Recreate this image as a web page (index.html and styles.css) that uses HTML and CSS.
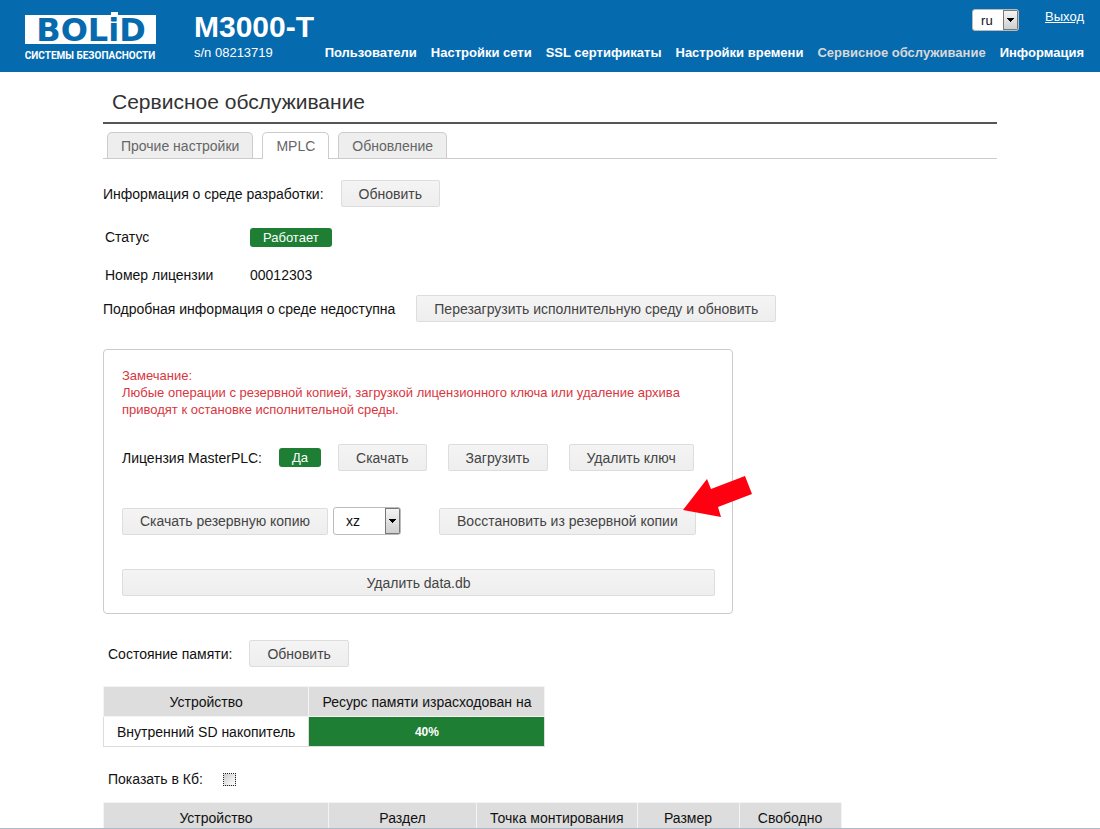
FILE: index.html
```html
<!DOCTYPE html>
<html lang="ru">
<head>
    <meta charset="UTF-8">
    <meta name="viewport" content="width=device-width, initial-scale=1.0">
    <title>M3000-T</title>
    <link rel="stylesheet" href="styles.css">
</head>
<body>
    <header>
        <a href="#" class="logo">
            <svg width="132" height="54" viewBox="0 0 132 54" role="img" aria-label="BOLiD">
                <rect x="0" y="5" width="131" height="29" fill="#fff"/>
                <rect x="86" y="2" width="7" height="5" fill="#fff"/>
                <text x="66" y="31" text-anchor="middle" class="logo-name">BOLiD</text>
                <text x="65" y="49" text-anchor="middle" class="logo-sub">СИСТЕМЫ БЕЗОПАСНОСТИ</text>
            </svg>
        </a>
        <div class="device">
            <div class="model">M3000-T</div>
            <div class="serial">s/n 08213719</div>
        </div>
        <div class="top">
            <div class="account">
                <select class="select lang" aria-label="Язык">
                    <option>ru</option>
                    <option>en</option>
                </select>
                <a href="#">Выход</a>
            </div>
            <nav>
                <ul>
                    <li><a href="#">Пользователи</a></li>
                    <li><a href="#">Настройки сети</a></li>
                    <li><a href="#">SSL сертификаты</a></li>
                    <li><a href="#">Настройки времени</a></li>
                    <li><a href="#" class="current">Сервисное обслуживание</a></li>
                    <li><a href="#">Информация</a></li>
                </ul>
            </nav>
        </div>
    </header>

    <main>
        <h1>Сервисное обслуживание</h1>
        <div class="tabs">
            <button type="button" class="tab">Прочие настройки</button>
            <button type="button" class="tab active">MPLC</button>
            <button type="button" class="tab">Обновление</button>
        </div>

        <div class="row env">
            <span>Информация о среде разработки:</span>
            <button type="button" class="btn">Обновить</button>
        </div>
        <dl class="info">
            <dt>Статус</dt>
            <dd><span class="badge">Работает</span></dd>
            <dt>Номер лицензии</dt>
            <dd>00012303</dd>
        </dl>
        <div class="row detail">
            <span>Подробная информация о среде недоступна</span>
            <button type="button" class="btn">Перезагрузить исполнительную среду и обновить</button>
        </div>

        <section class="panel">
            <p class="note">Замечание:<br>Любые операции с резервной копией, загрузкой лицензионного ключа или удаление архива приводят к остановке исполнительной среды.</p>
            <div class="row license">
                <span>Лицензия MasterPLC:</span>
                <span class="badge">Да</span>
                <div class="license-buttons">
                    <button type="button" class="btn">Скачать</button>
                    <button type="button" class="btn">Загрузить</button>
                    <button type="button" class="btn">Удалить ключ</button>
                </div>
            </div>
            <div class="row backup">
                <button type="button" class="btn">Скачать резервную копию</button>
                <select class="select format" aria-label="Формат архива">
                    <option>xz</option>
                    <option>gz</option>
                </select>
                <div class="restore">
                    <button type="button" class="btn">Восстановить из резервной копии</button>
                    <svg class="arrow" width="70" height="42" viewBox="0 0 70 42" aria-hidden="true">
                        <path d="M0 35 L24 4 L28 14 L62 1 L69 19 L35 32 L38 42 Z" fill="#ff0010"/>
                    </svg>
                </div>
            </div>
            <button type="button" class="btn wide">Удалить data.db</button>
        </section>

        <div class="row memory">
            <span>Состояние памяти:</span>
            <button type="button" class="btn">Обновить</button>
        </div>
        <table>
            <tr>
                <th>Устройство</th>
                <th>Ресурс памяти израсходован на</th>
            </tr>
            <tr>
                <td>Внутренний SD накопитель</td>
                <td class="usage">40%</td>
            </tr>
        </table>

        <div class="row units">
            <label for="showKb">Показать в Кб:</label>
            <input type="checkbox" id="showKb">
        </div>
        <table class="partitions">
            <tr>
                <th class="col-device">Устройство</th>
                <th class="col-part">Раздел</th>
                <th>Точка монтирования</th>
                <th class="col-size">Размер</th>
                <th class="col-size">Свободно</th>
            </tr>
        </table>
    </main>
    <div class="bottom-line"></div>
</body>
</html>
```

FILE: styles.css
```css
* {
    box-sizing: border-box;
}

body {
    margin: 0;
    height: 100vh;
    overflow: hidden;
    font-family: "Liberation Sans", Arial, sans-serif;
    font-size: 14px;
    line-height: 18px;
    color: #111;
    background: #fff;
}

button, select {
    font-family: inherit;
}

header {
    display: flex;
    height: 72px;
    padding: 0 16px 0 25px;
    background: #066aaf;
    color: #fff;
}

header a {
    color: #fff;
}

.logo {
    width: 132px;
    padding-top: 10px;
}

.logo-name {
    font: bold 32px "DejaVu Sans", sans-serif;
    fill: #066aaf;
}

.logo-sub {
    font: bold 10px Roboto, sans-serif;
    fill: #fff;
}

.device {
    margin-left: 37px;
    padding-top: 10px;
    white-space: nowrap;
}

.model {
    font-size: 30px;
    font-weight: bold;
    line-height: 34px;
}

.serial {
    font-size: 13px;
}

.top {
    flex: 1;
}

.account {
    display: flex;
    justify-content: flex-end;
    align-items: flex-start;
    gap: 26px;
    height: 43px;
    padding-top: 8px;
    font-size: 13px;
}

nav ul {
    display: flex;
    justify-content: flex-end;
    gap: 14px;
    margin: 0;
    padding: 0;
    list-style: none;
}

nav a {
    font-size: 13px;
    font-weight: bold;
    text-decoration: none;
    white-space: nowrap;
}

nav .current {
    color: #d8d8d8;
}

/* drop-down with a grey button at the right edge */
.select {
    appearance: none;
    border: 1px solid #bbb;
    border-radius: 3px;
    color: #111;
    background-color: #fff;
    background-image:
        linear-gradient(#000, #000),
        linear-gradient(#000, #000),
        linear-gradient(#000, #000),
        linear-gradient(#000, #000),
        linear-gradient(#f4f4f4, #cfcfcf),
        linear-gradient(#777, #777);
    background-repeat: no-repeat;
    background-size: 7px 1px, 5px 1px, 3px 1px, 1px 1px, 13px calc(100% - 2px), 15px 100%;
    background-position: right 4px top 8px, right 5px top 9px, right 6px top 10px, right 7px top 11px, right 1px center, right center;
}

.lang {
    width: 47px;
    height: 22px;
    margin-top: 1px;
    padding: 0 8px;
    font-size: 13px;
}

.format {
    width: 68px;
    height: 28px;
    padding: 0 12px;
    font-size: 14px;
    background-position: right 4px top 11px, right 5px top 12px, right 6px top 13px, right 7px top 14px, right 1px center, right center;
}

main {
    padding: 0 103px;
}

h1 {
    margin: 0;
    padding: 18px 9px 8px;
    border-bottom: 2px solid #555;
    font-size: 21px;
    font-weight: normal;
    line-height: 24px;
    color: #333;
}

.tabs {
    display: flex;
    gap: 9px;
    margin-top: 8px;
    padding-left: 4px;
    border-bottom: 1px solid #ccc;
}

.tab {
    height: 26px;
    padding: 0 13px;
    border: 1px solid #ccc;
    border-bottom: 0;
    border-radius: 5px 5px 0 0;
    background: #eee;
    color: #666;
    font-size: 14px;
}

.tab.active {
    margin-bottom: -1px;
    height: 27px;
    background: #fff;
}

.row {
    display: flex;
    align-items: center;
}

.btn {
    height: 27px;
    padding: 0 17px;
    border: 1px solid #ddd;
    border-radius: 2px;
    background: linear-gradient(#f4f4f4, #eee);
    color: #444;
    font-size: 14px;
    white-space: nowrap;
}

.badge {
    padding: 0 13px;
    border-radius: 3px;
    background: #1e7e34;
    color: #fff;
    font-size: 13px;
    line-height: 19px;
}

.env {
    gap: 17px;
    margin-top: 21px;
}

.info {
    display: grid;
    grid-template-columns: 145px auto;
    row-gap: 18px;
    margin: 20px 0 10px;
    padding-left: 2px;
    line-height: 20px;
}

.info dd {
    margin: 0;
}

.info .badge {
    display: inline-block;
}

.detail {
    gap: 21px;
}

.panel {
    max-width: 630px;
    margin-top: 27px;
    padding: 17px 17px 17px 18px;
    border: 1px solid #ccc;
    border-radius: 4px;
}

.note {
    margin: 0;
    font-size: 13px;
    line-height: 17px;
    color: #d9363e;
}

.license {
    gap: 17px;
    margin-top: 26px;
}

.license-buttons {
    display: flex;
    gap: 21px;
}

.backup {
    margin: 36px 0 34px;
    gap: 5px;
}

.restore {
    position: relative;
    margin-left: 33px;
}

/* pointer laid over the corner of the restore button */
.arrow {
    position: absolute;
    left: 244px;
    top: -33px;
}

.wide {
    width: 100%;
}

.memory {
    gap: 17px;
    margin-top: 26px;
    padding-left: 5px;
}

table {
    margin-top: 19px;
    border-collapse: collapse;
}

th, td {
    height: 30px;
    padding: 0 13px;
    border: 1px solid #ddd;
    text-align: center;
    white-space: nowrap;
}

th {
    border-color: #f4f4f4;
    background: #ddd;
    font-weight: normal;
}

td.usage {
    background: #1e7e34;
    color: #fff;
    font-size: 12px;
    font-weight: bold;
}

.units {
    gap: 20px;
    margin-top: 23px;
    padding-left: 5px;
}

.units input {
    appearance: none;
    width: 13px;
    height: 13px;
    margin: 0;
    border: 1px dotted #222;
    background: linear-gradient(135deg, #ccc, #fff);
}

.partitions {
    margin-top: 14px;
}

.col-device {
    width: 225px;
}

.col-part {
    width: 148px;
}

.col-size {
    width: 102px;
}

.bottom-line {
    position: fixed;
    left: 0;
    right: 0;
    bottom: 0;
    height: 1px;
    background: #a9bac8;
}
```
